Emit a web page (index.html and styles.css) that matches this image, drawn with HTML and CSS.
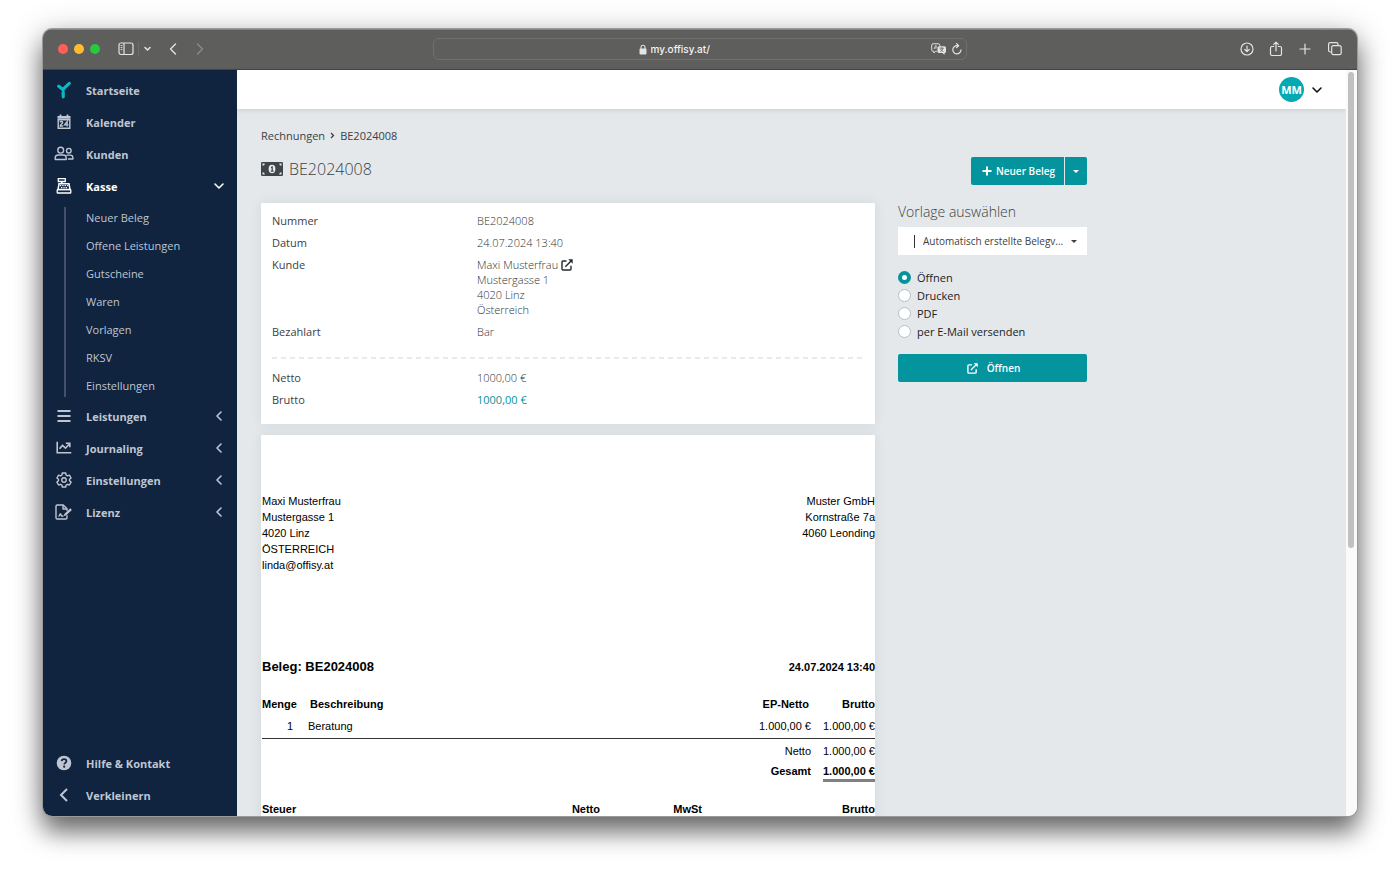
FILE: index.html
```html
<!DOCTYPE html>
<html lang="de">
<head>
<meta charset="utf-8">
<meta name="viewport" content="width=device-width, initial-scale=1">
<title>BE2024008 – Rechnungen</title>
<link rel="stylesheet" href="styles.css">
</head>
<body>
<div class="window">
  <div class="titlebar">
    <div class="titlebar-left">
      <span class="lights"><i class="light red"></i><i class="light yellow"></i><i class="light green"></i></span>
      <button class="tool" aria-label="Seitenleiste"><svg width="16" height="14" viewBox="0 0 16 14" fill="none" stroke="currentColor"><rect x="1" y="1" width="14" height="11.5" rx="2" stroke-width="1.2"/><path d="M6 1v11.5" stroke-width="1.2"/><path d="M2.7 3.6h1.6M2.7 5.6h1.6M2.7 7.6h1.6" stroke-width="1"/></svg></button>
      <button class="tool split" aria-label="Tabgruppen"><svg width="7" height="6" viewBox="0 0 7 6" fill="none" stroke="currentColor" stroke-width="1.5" stroke-linecap="round" stroke-linejoin="round"><path d="M1 1.5 3.5 4 6 1.5"/></svg></button>
      <button class="tool back" aria-label="Zurück"><svg width="8" height="12" viewBox="0 0 8 12" fill="none" stroke="currentColor" stroke-width="1.4" stroke-linecap="round" stroke-linejoin="round"><path d="M6.5 1 1.5 6l5 5"/></svg></button>
      <button class="tool forward" aria-label="Vorwärts"><svg width="8" height="12" viewBox="0 0 8 12" fill="none" stroke="currentColor" stroke-width="1.4" stroke-linecap="round" stroke-linejoin="round"><path d="m1.5 1 5 5-5 5"/></svg></button>
    </div>
    <div class="address">
      <div class="address-text">
        <svg width="8" height="11" viewBox="0 0 8 11"><path d="M2 5V3.2a2 2 0 0 1 4 0V5" fill="none" stroke="currentColor" stroke-width="1.1"/><rect x=".5" y="4.6" width="7" height="5.9" rx="1" fill="currentColor"/></svg>
        <input class="url" type="text" value="my.offisy.at/" aria-label="Adresse">
      </div>
      <button class="tool" aria-label="Übersetzen"><svg width="16" height="12" viewBox="0 0 16 12"><path d="M6 8.2H4.6L2.8 10V8.2H2.2A1.5 1.5 0 0 1 .7 6.7V2.3A1.5 1.5 0 0 1 2.2.8H7.3A1.5 1.5 0 0 1 8.8 2.3V3" fill="none" stroke="currentColor"/><path d="M3 6 4.8 2.5 5.8 4.5M3.6 5h2" fill="none" stroke="currentColor" stroke-width=".8"/><path d="M8 3.2h5.5A1.5 1.5 0 0 1 15 4.7v3.8A1.5 1.5 0 0 1 13.5 10v1.9L11.5 10H8A1.5 1.5 0 0 1 6.5 8.5V4.7A1.5 1.5 0 0 1 8 3.2z" fill="currentColor"/><path d="M8.6 5.2h4.2M10.7 4.3v1M9.2 8.5c1.5-.6 2.4-1.7 2.7-3.2M9.5 6c.6 1.3 1.5 2.1 2.9 2.5" fill="none" stroke="#5d5d5b" stroke-width=".8"/></svg></button>
      <button class="tool" aria-label="Neu laden"><svg width="10" height="12" viewBox="0 0 10 12" fill="none" stroke="currentColor" stroke-width="1.2" stroke-linecap="round"><path d="M5.6 2.7A4.1 4.1 0 1 0 9 6.9M4.6.7l2 2-2 2"/></svg></button>
    </div>
    <div class="titlebar-right">
      <button class="tool" aria-label="Downloads"><svg width="14" height="14" viewBox="0 0 14 14" fill="none" stroke="currentColor" stroke-width="1.2" stroke-linecap="round" stroke-linejoin="round"><circle cx="7" cy="7" r="6"/><path d="M7 4v5.5M4.8 7.5 7 9.7l2.2-2.2"/></svg></button>
      <button class="tool" aria-label="Teilen"><svg width="14" height="16" viewBox="0 0 14 16" fill="none" stroke="currentColor" stroke-width="1.2" stroke-linecap="round" stroke-linejoin="round"><path d="M4.7 5.5H3A1.5 1.5 0 0 0 1.5 7v6A1.5 1.5 0 0 0 3 14.5h8a1.5 1.5 0 0 0 1.5-1.5V7A1.5 1.5 0 0 0 11 5.5H9.3M7 10V1.2M4.7 3.4 7 1.1l2.3 2.3"/></svg></button>
      <button class="tool" aria-label="Neuer Tab"><svg width="14" height="14" viewBox="0 0 14 14" fill="none" stroke="currentColor" stroke-width="1.2" stroke-linecap="round"><path d="M7 2v10M2 7h10"/></svg></button>
      <button class="tool" aria-label="Tabübersicht"><svg width="16" height="16" viewBox="0 0 16 16" fill="none" stroke="currentColor" stroke-width="1.2"><rect x="4.7" y="4.7" width="9.5" height="9" rx="1.7"/><path d="M4.7 11H3.3A1.7 1.7 0 0 1 1.6 9.3V3.3a1.7 1.7 0 0 1 1.7-1.7h6a1.7 1.7 0 0 1 1.7 1.7v1.4"/></svg></button>
    </div>
  </div>

  <div class="app">
    <nav class="sidebar">
      <ul class="menu">
        <li><a class="item" href="#"><svg class="icon" viewBox="0 0 18 18" fill="none" stroke="#0ab9c3" stroke-width="3.2" stroke-linecap="round" stroke-linejoin="round"><path d="M3.7 5.2 7.9 8.4 14.3 2.4"/><path d="M8.200 11.300v4.500"/><path d="M8.200 8.400v1.300" stroke-linecap="butt"/></svg><span>Startseite</span></a></li>
        <li><a class="item" href="#"><svg class="icon" viewBox="0 0 18 18"><path d="M5.5 1.5v3M12.5 1.5v3" stroke="currentColor" stroke-width="1.8"/><path d="M2.5 3h13v2.7h-13z" fill="currentColor"/><path d="M3.2 6.8h11.6v8.5H3.2z" fill="none" stroke="currentColor" stroke-width="1.4"/><path d="M5 9.2c.4-1 2.7-1 2.7.3 0 1.200-2.600 1.800-2.600 3.500h3M12.200 13.500V8.400L9.500 11.900h4" fill="none" stroke="currentColor" stroke-width="1.3"/></svg><span>Kalender</span></a></li>
        <li><a class="item" href="#"><svg class="icon wide" viewBox="0 0 20 18" fill="none" stroke="currentColor" stroke-width="1.4" stroke-linejoin="round"><circle cx="6.7" cy="5.2" r="2.9"/><circle cx="14.8" cy="5.7" r="2.3"/><path d="M1.2 14.5V13c0-1.800 1.200-3 3-3h5c1.800 0 3 1.200 3 3v1.500zM12.300 10.100h3.900c1.600 0 2.700 1.100 2.700 2.700v1.200h-5"/></svg><span>Kunden</span></a></li>
        <li><a class="item active" href="#" aria-expanded="true"><svg class="icon" viewBox="0 0 18 18" fill="none" stroke="currentColor"><path d="M3.3 1.7h7v2.8h-7z" stroke-width="1.3"/><path d="M6.8 4.5v2.3" stroke-width="1.6"/><path d="M4 6.8h10l1 5.8H3z" stroke-width="1.5"/><path d="M5 8.700h1.300M7.300 8.700h1.300M9.600 8.700h1.300M11.900 8.700h1.300M6 10.600h1.300M8.400 10.600h1.300M10.700 10.600H12" stroke-width="1.2"/><rect x="2.2" y="12.7" width="13.6" height="3.3" rx=".6" stroke-width="1.3"/></svg><span>Kasse</span><svg class="chev" viewBox="0 0 12 12"><path d="m2 4 4 4 4-4"/></svg></a>
          <ul class="submenu">
            <li><a href="#">Neuer Beleg</a></li>
            <li><a href="#">Offene Leistungen</a></li>
            <li><a href="#">Gutscheine</a></li>
            <li><a href="#">Waren</a></li>
            <li><a href="#">Vorlagen</a></li>
            <li><a href="#">RKSV</a></li>
            <li><a href="#">Einstellungen</a></li>
          </ul>
        </li>
        <li><a class="item" href="#"><svg class="icon" viewBox="0 0 18 18" stroke="currentColor" stroke-width="2"><path d="M2.5 4h13M2.5 9h13M2.5 14h13"/></svg><span>Leistungen</span><svg class="chev" viewBox="0 0 12 12"><path d="M8 2 4 6l4 4"/></svg></a></li>
        <li><a class="item" href="#"><svg class="icon" viewBox="0 0 18 18" fill="none" stroke="currentColor" stroke-width="1.6"><path d="M2.2 2.7v11.1h14.1"/><path d="m4.5 9.8 3-3.3 3 2.7L14 5.3"/><path d="M10.8 4.3h4v4"/><path d="m12.5 4 2.5 2.5V4z" fill="currentColor" stroke="none"/></svg><span>Journaling</span><svg class="chev" viewBox="0 0 12 12"><path d="M8 2 4 6l4 4"/></svg></a></li>
        <li><a class="item" href="#"><svg class="icon" viewBox="0 0 18 18" fill="none" stroke="currentColor" stroke-width="1.4" stroke-linejoin="round"><path d="M7.3 2h3.4l.4 2 1.3.8 2-.7 1.7 2.9-1.6 1.3v1.5l1.6 1.3-1.7 2.9-2-.7-1.3.8-.4 1.9H7.3l-.4-1.9-1.3-.8-2 .7-1.7-2.9 1.6-1.3V8.3L1.9 7l1.7-2.9 2 .7L6.9 4z"/><circle cx="9" cy="9" r="2.2"/></svg><span>Einstellungen</span><svg class="chev" viewBox="0 0 12 12"><path d="M8 2 4 6l4 4"/></svg></a></li>
        <li><a class="item" href="#"><svg class="icon" viewBox="0 0 18 18" fill="none" stroke="currentColor" stroke-width="1.4" stroke-linejoin="round"><path d="M12 12.3v2.5a1.2 1.2 0 0 1-1.2 1.2H2.2A1.2 1.2 0 0 1 1 14.8V3.2A1.2 1.2 0 0 1 2.2 2h6L12 5.8v2"/><path d="M8 2v4h4M3.5 13.2c1.3 0 1-2.2 1.9-2.2.8 0 .6 2 1.5 2h1.6"/><path d="m8.9 12.9.4-2 6-5.6 1.6 1.6-6 5.6z" fill="currentColor" stroke="none"/></svg><span>Lizenz</span><svg class="chev" viewBox="0 0 12 12"><path d="M8 2 4 6l4 4"/></svg></a></li>
      </ul>
      <ul class="menu">
        <li><a class="item" href="#"><svg class="icon" viewBox="0 0 18 18"><circle cx="9" cy="9" r="7.3" fill="currentColor"/><path d="M6.6 7.2C6.8 5.8 7.7 5.2 9 5.2c1.4 0 2.4.8 2.4 2 0 1.7-2.2 1.7-2.2 3.4" fill="none" stroke="#10233f" stroke-width="1.7"/><circle cx="9.2" cy="12.7" r="1.1" fill="#10233f"/></svg><span>Hilfe &amp; Kontakt</span></a></li>
        <li><a class="item" href="#"><svg class="icon" viewBox="0 0 18 18" fill="none" stroke="currentColor" stroke-width="2"><path d="M12 3 6 9l6 6"/></svg><span>Verkleinern</span></a></li>
      </ul>
    </nav>

    <div class="page">
      <header class="topbar">
        <button class="account" aria-label="Benutzermenü"><span class="avatar">MM</span><svg class="chev" viewBox="0 0 12 12"><path d="m2 4 4 4 4-4"/></svg></button>
      </header>
      <main class="content">
        <div class="head">
          <div>
            <div class="crumbs"><a href="#">Rechnungen</a><svg width="5" height="7" viewBox="0 0 5 7" fill="none" stroke="currentColor" stroke-width="1.3"><path d="m1 1 2.5 2.5L1 6"/></svg><span>BE2024008</span></div>
            <h1 class="title"><svg width="22" height="14" viewBox="0 0 22 14"><rect width="22" height="14" rx="1.3" fill="#3f4548"/><ellipse cx="11" cy="7" rx="3.4" ry="4.2" fill="#e8ebed"/><path d="M10 5.6 11.2 5v4M9.8 9.2h2.8" fill="none" stroke="#3f4548" stroke-width="1.2"/><path d="M1.5 3.8V1.5h2.3a2.3 2.3 0 0 1-2.3 2.3zM20.5 3.8V1.5h-2.3a2.3 2.3 0 0 0 2.3 2.3zM1.5 10.2v2.3h2.3a2.3 2.3 0 0 0-2.3-2.3zM20.5 10.2v2.3h-2.3a2.3 2.3 0 0 1 2.3-2.3z" fill="#e8ebed"/></svg>BE2024008</h1>
          </div>
          <div class="split-button">
            <button class="btn"><svg width="10" height="10" viewBox="0 0 10 10" stroke="currentColor" stroke-width="2"><path d="M5 .5v9M.5 5h9"/></svg>Neuer Beleg</button>
            <button class="btn more" aria-label="Weitere Belegarten"><i class="caret"></i></button>
          </div>
        </div>
        <div class="columns">
          <div class="left">
            <section class="card details">
              <dl>
                <dt>Nummer</dt><dd>BE2024008</dd>
                <dt>Datum</dt><dd>24.07.2024 13:40</dd>
                <dt>Kunde</dt><dd>Maxi Musterfrau <a class="open" href="#" aria-label="Kunde öffnen"><svg width="12" height="12" viewBox="0 0 12 12" fill="none" stroke="currentColor" stroke-width="1.4"><path d="M5.5 2H2a1 1 0 0 0-1 1v7a1 1 0 0 0 1 1h7a1 1 0 0 0 1-1V6.8M4.3 7.7l6-6"/><path d="M7.3.3h4.4v4.4z" fill="currentColor" stroke="none"/></svg></a><br>Mustergasse 1<br>4020 Linz<br>Österreich</dd>
                <dt>Bezahlart</dt><dd>Bar</dd>
              </dl>
              <svg class="dashes" height="2" aria-hidden="true"><line x1="0" y1="1" x2="100%" y2="1" stroke="#e9e9e9" stroke-width="2" stroke-dasharray="5 4"/></svg>
              <dl>
                <dt>Netto</dt><dd>1000,00 €</dd>
                <dt>Brutto</dt><dd class="accent">1000,00 €</dd>
              </dl>
            </section>
            <article class="card receipt">
              <div class="parties">
                <address>Maxi Musterfrau<br>Mustergasse 1<br>4020 Linz<br>ÖSTERREICH<br>linda@offisy.at</address>
                <address class="seller">Muster GmbH<br>Kornstraße 7a<br>4060 Leonding</address>
              </div>
              <div class="receipt-head"><h2>Beleg: BE2024008</h2><strong>24.07.2024 13:40</strong></div>
              <table class="positions">
                <colgroup><col class="c-qty"><col><col class="c-net"><col class="c-gross"></colgroup>
                <thead><tr><th class="start">Menge</th><th class="start desc">Beschreibung</th><th class="net">EP-Netto</th><th>Brutto</th></tr></thead>
                <tbody><tr><td class="qty">1</td><td class="start">Beratung</td><td>1.000,00 €</td><td>1.000,00 €</td></tr></tbody>
                <tfoot>
                  <tr class="sum"><td colspan="3">Netto</td><td>1.000,00 €</td></tr>
                  <tr class="total"><th colspan="3">Gesamt</th><th><span class="double">1.000,00 €</span></th></tr>
                </tfoot>
              </table>
              <table class="taxes">
                <colgroup><col class="t-name"><col class="t-net"><col class="t-vat"><col></colgroup>
                <thead><tr><th class="start">Steuer</th><th>Netto</th><th>MwSt</th><th>Brutto</th></tr></thead>
              </table>
            </article>
          </div>
          <form class="panel">
            <label class="panel-title" for="template">Vorlage auswählen</label>
            <div class="picker">
              <i class="bar"></i>
              <select id="template"><option>Automatisch erstellte Belegv...</option></select>
              <i class="caret"></i>
            </div>
            <div class="options">
              <label><input type="radio" name="action" checked>Öffnen</label>
              <label><input type="radio" name="action">Drucken</label>
              <label><input type="radio" name="action">PDF</label>
              <label><input type="radio" name="action">per E-Mail versenden</label>
            </div>
            <button class="btn submit" type="button"><svg width="11" height="11" viewBox="0 0 12 12" fill="none" stroke="currentColor" stroke-width="1.5"><path d="M5.5 2H2a1 1 0 0 0-1 1v7a1 1 0 0 0 1 1h7a1 1 0 0 0 1-1V6.8M4.3 7.7l6-6"/><path d="M7.3.3h4.4v4.4z" fill="currentColor" stroke="none"/></svg>Öffnen</button>
          </form>
        </div>
      </main>
    </div>
    <div class="scrolltrack"><div class="thumb"></div></div>
  </div>
</div>
</body>
</html>
```
FILE: styles.css
```css
* { box-sizing: border-box; }
body {
  margin: 0;
  height: 100vh;
  padding: 29px 43px 57px;
  background: #fff;
  color: #3b4144;
  font: 11px/15px "Open Sans", "Noto Sans", sans-serif;
}
ul, dl, dd, h1, h2 { margin: 0; padding: 0; }
ul { list-style: none; }
a { color: inherit; text-decoration: none; }
button { border: 0; padding: 0; background: none; color: inherit; font: inherit; }
svg { display: block; flex: none; }
address { font-style: normal; }

.window {
  display: flex;
  flex-direction: column;
  height: 100%;
  border-radius: 9px;
  overflow: hidden;
  background: #fff;
  box-shadow: 0 0 0 1px #9a9a9a, 0 16px 24px rgba(0, 0, 0, .5), 0 4px 32px rgba(0, 0, 0, .25);
}

/* browser chrome */
.titlebar {
  flex: none;
  display: grid;
  grid-template-columns: 1fr minmax(0, 534px) 1fr;
  align-items: center;
  height: 41px;
  padding-bottom: 1px;
  background: #5e5e5c;
  border-top: 1px solid #858583;
  border-bottom: 1px solid #434342;
  color: #e4e4e3;
}
.titlebar-left, .titlebar-right, .address, .lights { display: flex; align-items: center; }
.titlebar-left { padding-left: 15px; }
.lights { gap: 6px; margin-right: 18px; }
.light { width: 10px; height: 10px; border-radius: 50%; }
.red { background: #ff5f57; }
.yellow { background: #febc2e; }
.green { background: #28c840; }
.tool { display: flex; align-items: center; }
.split { margin-left: 4px; padding: 4px 0 4px 5px; border-left: 1px solid #6c6c6a; }
.back { margin-left: 18px; }
.forward { margin-left: 19px; color: #8b8b89; }
.address {
  height: 22px;
  gap: 5px;
  padding: 0 4px;
  border: 1px solid #71716f;
  border-radius: 6px;
}
.address-text {
  flex: 1;
  display: flex;
  align-items: center;
  justify-content: center;
  gap: 4px;
  padding-right: 15px;
}
.url {
  width: 60px;
  border: 0;
  padding: 0;
  background: none;
  color: #f4f4f4;
  font: 500 10px/15px Inter, Roboto, sans-serif;
}
.titlebar-right { justify-content: flex-end; gap: 15px; padding-right: 14px; }

.app { flex: 1; min-height: 0; display: flex; }

/* sidebar */
.sidebar {
  flex: none;
  width: 194px;
  display: flex;
  flex-direction: column;
  justify-content: space-between;
  padding: 4px 0 5px;
  background: #10233f;
  color: #bfc6d2;
}
.item {
  display: flex;
  align-items: center;
  height: 32px;
  padding: 0 12px;
  font-weight: 700;
}
.item.active { color: #fff; }
.icon { width: 18px; height: 18px; margin-right: 13px; }
.icon.wide { width: 20px; margin: 0 12px 0 -1px; }
.item span { flex: 1; }
.chev {
  width: 12px;
  height: 12px;
  fill: none;
  stroke: currentColor;
  stroke-width: 1.6;
  stroke-linecap: round;
  stroke-linejoin: round;
}
.submenu {
  margin-top: 2px;
  background: linear-gradient(#42506a, #42506a) no-repeat 21px center / 2px calc(100% - 6px);
}
.submenu a { display: block; padding-left: 43px; line-height: 28px; }

/* page */
.page { flex: 1; min-width: 0; display: flex; flex-direction: column; background: #e4e8eb; }
.topbar {
  flex: none;
  display: flex;
  justify-content: flex-end;
  height: 39px;
  padding-right: 23px;
  background: #fff;
  box-shadow: 0 1px 5px rgba(60, 80, 90, .18);
}
.account { display: flex; align-items: center; gap: 7px; color: #111; }
.avatar {
  width: 25px;
  height: 25px;
  border-radius: 50%;
  background: #05a9b4;
  color: #fff;
  font-weight: 700;
  line-height: 25px;
}
.content { flex: 1; min-height: 0; overflow: hidden; padding: 19px 24px 0; }
.head, .columns { max-width: 826px; }
.head { display: flex; justify-content: space-between; align-items: flex-end; }
.crumbs { display: flex; align-items: center; gap: 5px; }
.title {
  display: flex;
  align-items: center;
  gap: 6px;
  margin-top: 14px;
  font-size: 16px;
  font-weight: 300;
  line-height: 24px;
}
.split-button { display: flex; gap: 1px; margin-bottom: -4px; }
.btn {
  display: flex;
  align-items: center;
  justify-content: center;
  gap: 4px;
  height: 28px;
  padding: 0 9px 0 11px;
  border-radius: 2px;
  background: #04949e;
  color: #fff;
  font-size: 10px;
  font-weight: 600;
}
.split-button .btn:first-child { border-radius: 2px 0 0 2px; }
.split-button .more { width: 22px; padding: 0; border-radius: 0 2px 2px 0; }
.caret { border: 3px solid transparent; border-top-color: currentColor; border-bottom: 0; }
.columns { display: grid; grid-template-columns: minmax(0, 1fr) 189px; gap: 23px; margin-top: 22px; }
.card { background: #fff; box-shadow: 0 0 10px rgba(70, 90, 100, .12); }

.details { padding: 10px 11px 17px; }
.details dl { display: grid; grid-template-columns: 205px 1fr; row-gap: 7px; }
.details dd { color: #2c3235; font-weight: 300; }
.details .accent { color: #04949e; font-weight: 400; }
.dashes { width: 100%; margin: 18px 0 11px; }
.open { display: inline-block; height: 12px; vertical-align: -2px; color: #222b33; }

/* receipt */
.receipt {
  margin-top: 11px;
  padding: 58px 0 30px 1px;
  color: #000;
  font: 11px/15px "Liberation Sans", Arial, sans-serif;
}
.parties { display: flex; justify-content: space-between; line-height: 16px; }
.seller { text-align: right; }
.receipt-head { display: flex; justify-content: space-between; align-items: center; margin-top: 86px; }
.receipt h2 { font-size: 13px; line-height: 16px; }
.receipt table { width: 100%; border-collapse: collapse; table-layout: fixed; }
.receipt th, .receipt td { padding: 0; text-align: right; vertical-align: top; }
.receipt .start { text-align: left; }
.positions { margin-top: 22px; }
.c-qty { width: 46px; }
.c-net { width: 120px; }
.c-gross { width: 64px; }
.receipt .desc { padding-left: 2px; }
.receipt .net { padding-right: 2px; }
.receipt .qty { padding-right: 15px; }
.positions tbody td { padding: 7px 0 4px; border-bottom: 1px solid #333; }
.receipt .sum td { padding: 5px 0; }
.double { display: inline-block; border-bottom: 3px solid #808080; }
.taxes { margin-top: 20px; }
.t-name { width: 230px; }
.t-net { width: 108px; }
.t-vat { width: 102px; }

/* action panel */
.panel-title { display: block; font-size: 14px; font-weight: 300; line-height: 18px; }
.picker {
  display: flex;
  align-items: center;
  height: 28px;
  margin: 6px 0 15px;
  padding: 0 10px 0 16px;
  background: #fff;
}
.bar { width: 1px; height: 13px; margin-right: 8px; background: #333; }
.picker select {
  flex: 1;
  min-width: 0;
  appearance: none;
  border: 0;
  padding: 0;
  background: none;
  color: #3b4144;
  font: 10px/15px "Open Sans", sans-serif;
}
.options { display: grid; row-gap: 3px; color: #222; }
.options label { display: flex; align-items: center; gap: 6px; }
.options input {
  appearance: none;
  width: 13px;
  height: 13px;
  margin: 0;
  border: 1px solid #b6bfc6;
  border-radius: 50%;
  background: #fff;
}
.options input:checked { border: 4px solid #04949e; }
.submit { width: 100%; margin-top: 15px; gap: 9px; }

/* scrollbar */
.scrolltrack { flex: none; width: 11px; padding: 2px 3px 0 2px; background: #fafafa; }
.thumb { height: 64%; border-radius: 3px; background: #c1c1c1; }
```
